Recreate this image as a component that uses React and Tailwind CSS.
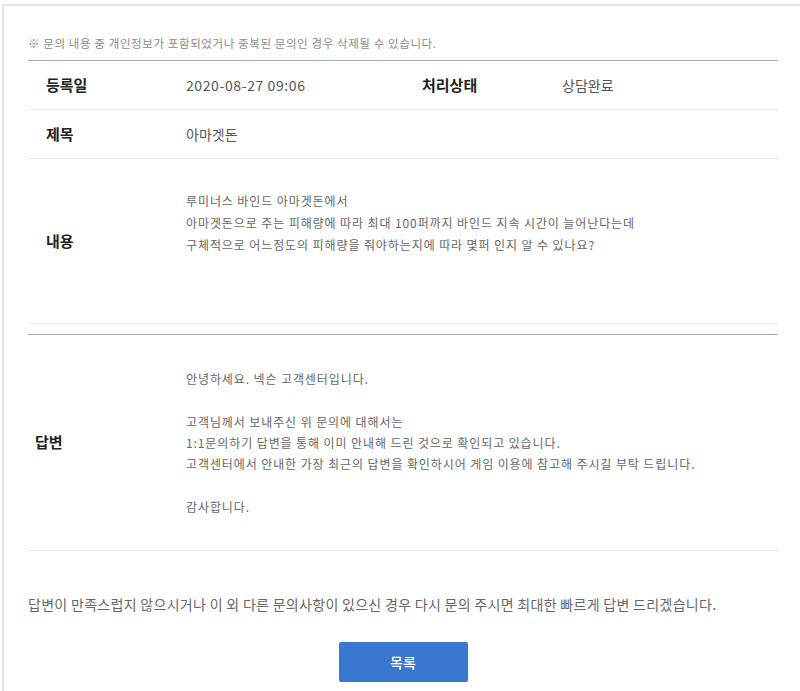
import React from 'react'

const font = { fontFamily: '"Noto Sans CJK KR", "Noto Sans", sans-serif' }

const inquiry = [
  '루미너스 바인드 아마겟돈에서',
  '아마겟돈으로 주는 피해량에 따라 최대 100퍼까지 바인드 지속 시간이 늘어난다는데',
  '구체적으로 어느정도의 피해량을 줘야하는지에 따라 몇퍼 인지 알 수 있나요?',
]

const answer = [
  '안녕하세요. 넥슨 고객센터입니다.',
  '',
  '고객님께서 보내주신 위 문의에 대해서는',
  '1:1문의하기 답변을 통해 이미 안내해 드린 것으로 확인되고 있습니다.',
  '고객센터에서 안내한 가장 최근의 답변을 확인하시어 게임 이용에 참고해 주시길 부탁 드립니다.',
  '',
  '감사합니다.',
]

const App = () => {
  return (
    <div className="w-[800px] h-[691px] bg-white pt-1 pl-[2px] overflow-hidden" style={font}>
      <div className="h-full border-t-2 border-l-2 border-[#e3e5ea] pl-[24px] pr-[20px]">
        <p className="mt-[30px] text-[11.5px] tracking-[0.6px] leading-[14px] text-[#8a8a8a]">
          ※ 문의 내용 중 개인정보가 포함되었거나 중복된 문의인 경우 삭제될 수 있습니다.
        </p>

        <div className="mt-[10px] w-[750px] border-t border-[#a3a8b4]">
          <div className="flex items-center h-[49px] border-b border-[#ececec]">
            <div className="w-[158px] pl-[18px] text-[15px] font-bold text-[#222]">등록일</div>
            <div className="w-[236px] text-[14px] tracking-[0.6px] text-[#555]">2020-08-27 09:06</div>
            <div className="w-[140px] text-[15px] font-bold text-[#222]">처리상태</div>
            <div className="text-[14px] text-[#555]">상담완료</div>
          </div>
          <div className="flex items-center h-[49px] border-b border-[#ececec]">
            <div className="w-[158px] pl-[18px] text-[15px] font-bold text-[#222]">제목</div>
            <div className="text-[14px] text-[#555]">아마겟돈</div>
          </div>
          <div className="flex items-center h-[165px] border-b border-[#ececec]">
            <div className="w-[158px] pl-[18px] text-[15px] font-bold text-[#222]">내용</div>
            <div className="self-start pt-[31px] text-[12px] tracking-[0.9px] leading-[22px] text-[#666]">
              {inquiry.map((line, i) => (
                <div key={i}>{line}</div>
              ))}
            </div>
          </div>
        </div>

        <div className="mt-[10px] w-[750px] border-t border-[#a3a8b4]">
          <div className="flex items-center h-[216px] border-b border-[#ececec]">
            <div className="w-[158px] pl-[7px] text-[15px] font-bold text-[#222]">답변</div>
            <div className="text-[12px] tracking-[0.9px] leading-[21.3px] text-[#666]">
              {answer.map((line, i) => (
                <div key={i} className="h-[21.3px]">{line}</div>
              ))}
            </div>
          </div>
        </div>

        <p className="mt-[44px] text-[14px] tracking-[0.3px] leading-[18px] text-[#666]">
          답변이 만족스럽지 않으시거나 이 외 다른 문의사항이 있으신 경우 다시 문의 주시면 최대한 빠르게 답변 드리겠습니다.
        </p>

        <div className="w-[750px] flex justify-center mt-[29px]">
          <button className="w-[129px] h-[40px] rounded-[2px] bg-[#3a77d0] text-white text-[14px] font-medium">
            목록
          </button>
        </div>
      </div>
    </div>
  )
}

export default App
